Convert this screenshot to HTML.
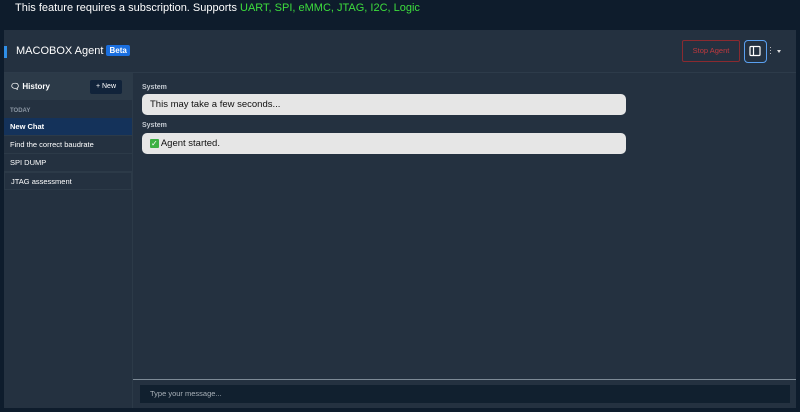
<!DOCTYPE html><html><head><style>
*{box-sizing:border-box;margin:0;padding:0}
body{width:800px;height:412px;background:#0e1c2c;font-family:"Liberation Sans",sans-serif;position:relative;overflow:hidden;color:#fff}
.top{position:absolute;left:15px;top:2px;font-size:11px;color:#fff}
.top span{color:#3ddc3d}
.panel{position:absolute;left:4px;top:30px;width:792px;height:378px;background:#243140}
.hdr{position:absolute;left:0;top:0;width:792px;height:43px;border-bottom:1px solid #2d3b4a}
.bar{position:absolute;left:0;top:16px;width:3px;height:12px;background:#2f8fe8}
.title{position:absolute;left:12px;top:15px;font-size:11px}
.beta{display:inline-block;background:#1a6fe0;font-size:8px;font-weight:bold;padding:1px 3px;border-radius:2px;vertical-align:1px}
.stop{position:absolute;left:678px;top:10px;width:58px;height:22px;border:1px solid #8a2a30;border-radius:2px;color:#c0393e;font-size:7.5px;text-align:center;line-height:20px}
.tog{position:absolute;left:740px;top:10px;width:23px;height:23px;border:1.5px solid #5aa0f0;border-radius:4px}
.side{position:absolute;left:0;top:43px;width:129px;height:335px;border-right:1px solid #2c3a48}
.sh{height:27px;background:#2c3a48;position:relative}
.sh b{position:absolute;left:6px;top:9px;font-size:8px}
.new{position:absolute;left:86px;top:7px;width:32px;height:14px;background:#11233a;border-radius:2px;font-size:7px;text-align:center;line-height:14px}
.today{font-size:6px;color:#8b96a3;padding:8px 6px 4px;font-weight:bold}
.it{height:18px;font-size:7.5px;line-height:18px;padding-left:6px;border-bottom:1px solid #2c3a48}
.act{background:#14325a;font-weight:bold}
.lbl{position:absolute;left:138px;font-size:7px;color:#c6ccd3;font-weight:bold}
.msg{position:absolute;left:138px;width:484px;height:21px;background:#e6e6e6;border-radius:5px;color:#111;font-size:9.5px;line-height:21px;padding-left:8px}
.inp{position:absolute;left:129px;top:349px;width:663px;border-top:1px solid #7d8a96}
.box{position:absolute;left:136px;top:355px;width:650px;height:18px;background:#11202f;font-size:7.5px;color:#a8b0b8;line-height:18px;padding-left:10px}
</style></head><body>
<div class="top">This feature requires a subscription. Supports <span>UART, SPI, eMMC, JTAG, I2C, Logic</span></div>
<div class="panel">
<div class="hdr"><div class="bar"></div><div class="title">MACOBOX Agent <span class="beta">Beta</span></div>
<div class="stop">Stop Agent</div>
<div class="tog"><svg width="20" height="20" viewBox="0 0 20 20" style="position:absolute;left:0;top:0"><rect x="5" y="5.5" width="10" height="9" rx="1" fill="none" stroke="#fff" stroke-width="1.2"/><line x1="8.5" y1="5.5" x2="8.5" y2="14.5" stroke="#fff" stroke-width="1.2"/></svg></div>
<div style="position:absolute;left:765px;top:16px;font-size:9px;color:#ccc;line-height:3px">·<br>·<br>·</div>
<div style="position:absolute;left:773px;top:20px;width:0;height:0;border-left:2.5px solid transparent;border-right:2.5px solid transparent;border-top:3px solid #ddd"></div>
</div>
<div class="side"><div class="sh"><b>🗨 History</b><div class="new">+ New</div></div>
<div class="today">TODAY</div>
<div class="it act">New Chat</div><div class="it">Find the correct baudrate</div><div class="it">SPI DUMP</div><div class="it" style="border:1px solid #2c3a48">JTAG assessment</div></div>
<div class="lbl" style="top:54px">System</div>
<div class="msg" style="top:64px">This may take a few seconds...</div>
<div class="lbl" style="top:92px">System</div>
<div class="msg" style="top:103px"><span style="color:#fff;background:#3cb043;font-size:8px;padding:0 1px;border-radius:1px">✓</span> Agent started.</div>
<div class="inp"></div>
<div class="box">Type your message...</div>
</div>
</body></html>
